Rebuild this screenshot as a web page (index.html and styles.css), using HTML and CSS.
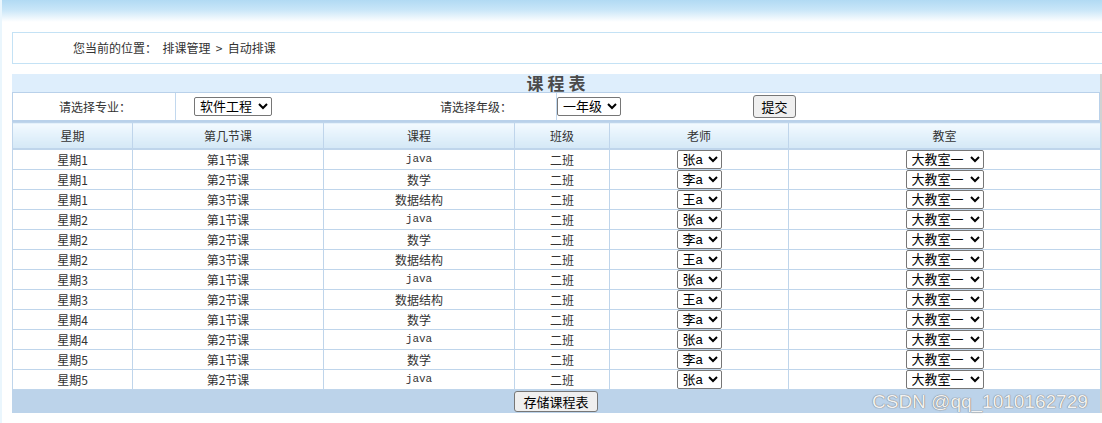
FILE: index.html
```html
<!DOCTYPE html>
<html lang="zh-CN">
<head>
<meta charset="utf-8">
<title>自动排课</title>
<link rel="stylesheet" href="styles.css">
</head>
<body>
<div class="topbar"></div>
<div class="page">
  <div class="crumb">您当前的位置：&nbsp;&nbsp;排课管理&nbsp;&nbsp;&gt;&nbsp;&nbsp;自动排课</div>
  <div class="sheet">
    <div class="title">课程表</div>
    <div class="filter">
      <div class="fcell fa">请选择专业：</div>
      <div class="fcell fb">
        <select class="sel sel-major"><option>软件工程</option></select>
        <span class="lab2">请选择年级：</span>
      </div>
      <div class="fcell fc">
        <select class="sel sel-grade"><option>一年级</option></select>
        <button class="btn btn-submit">提交</button>
      </div>
    </div>
    <table class="grid">
      <colgroup>
        <col class="c1"><col class="c2"><col class="c3"><col class="c4"><col class="c5"><col class="c6">
      </colgroup>
      <thead>
        <tr><th>星期</th><th>第几节课</th><th>课程</th><th>班级</th><th>老师</th><th>教室</th></tr>
      </thead>
      <tbody>
        <tr><td>星期1</td><td>第1节课</td><td class="mono">java</td><td>二班</td><td><select class="sel sel-t"><option>张a</option></select></td><td><select class="sel sel-r"><option>大教室一</option></select></td></tr>
        <tr><td>星期1</td><td>第2节课</td><td>数学</td><td>二班</td><td><select class="sel sel-t"><option>李a</option></select></td><td><select class="sel sel-r"><option>大教室一</option></select></td></tr>
        <tr><td>星期1</td><td>第3节课</td><td>数据结构</td><td>二班</td><td><select class="sel sel-t"><option>王a</option></select></td><td><select class="sel sel-r"><option>大教室一</option></select></td></tr>
        <tr><td>星期2</td><td>第1节课</td><td class="mono">java</td><td>二班</td><td><select class="sel sel-t"><option>张a</option></select></td><td><select class="sel sel-r"><option>大教室一</option></select></td></tr>
        <tr><td>星期2</td><td>第2节课</td><td>数学</td><td>二班</td><td><select class="sel sel-t"><option>李a</option></select></td><td><select class="sel sel-r"><option>大教室一</option></select></td></tr>
        <tr><td>星期2</td><td>第3节课</td><td>数据结构</td><td>二班</td><td><select class="sel sel-t"><option>王a</option></select></td><td><select class="sel sel-r"><option>大教室一</option></select></td></tr>
        <tr><td>星期3</td><td>第1节课</td><td class="mono">java</td><td>二班</td><td><select class="sel sel-t"><option>张a</option></select></td><td><select class="sel sel-r"><option>大教室一</option></select></td></tr>
        <tr><td>星期3</td><td>第2节课</td><td>数据结构</td><td>二班</td><td><select class="sel sel-t"><option>王a</option></select></td><td><select class="sel sel-r"><option>大教室一</option></select></td></tr>
        <tr><td>星期4</td><td>第1节课</td><td>数学</td><td>二班</td><td><select class="sel sel-t"><option>李a</option></select></td><td><select class="sel sel-r"><option>大教室一</option></select></td></tr>
        <tr><td>星期4</td><td>第2节课</td><td class="mono">java</td><td>二班</td><td><select class="sel sel-t"><option>张a</option></select></td><td><select class="sel sel-r"><option>大教室一</option></select></td></tr>
        <tr><td>星期5</td><td>第1节课</td><td>数学</td><td>二班</td><td><select class="sel sel-t"><option>李a</option></select></td><td><select class="sel sel-r"><option>大教室一</option></select></td></tr>
        <tr><td>星期5</td><td>第2节课</td><td class="mono">java</td><td>二班</td><td><select class="sel sel-t"><option>张a</option></select></td><td><select class="sel sel-r"><option>大教室一</option></select></td></tr>
      </tbody>
    </table>
    <div class="foot">
      <button class="btn btn-save">存储课程表</button>
      <span class="mark">CSDN @qq_1010162729</span>
    </div>
  </div>
</div>
</body>
</html>
```

FILE: styles.css
```css
html, body {
  margin: 0;
  padding: 0;
  background: #fff;
  overflow: hidden;
}
body {
  font-family: "Noto Sans CJK SC", "Noto Sans", sans-serif;
  font-size: 12px;
  color: #333;
  height: 423px;
  border-left: 2px solid #eaf6fd;
  box-sizing: border-box;
}
.topbar {
  height: 22px;
  margin-left: -2px;
  background: linear-gradient(to bottom, #b1daf3 0%, #c9e6f8 45%, #ffffff 100%);
}
.page {
  padding: 10px 0 0 10px;
}
.crumb {
  height: 30px;
  line-height: 30px;
  border: 1px solid #c4e2f5;
  border-right: none;
  padding-left: 60px;
  margin-right: -20px;
  color: #333;
}
.sheet {
  margin-top: 10px;
  width: 1088px;
  position: relative;
  box-shadow: 2px 0 0 #d2d2d2;
}
.title {
  height: 19px;
  line-height: 18px;
  background: #deeefc;
  text-align: center;
  font-size: 17px;
  font-weight: bold;
  letter-spacing: 4px;
  padding-left: 4px;
  color: #4a4a4a;
  box-sizing: border-box;
  border-bottom: 1px solid #b9d1ea;
}
.filter {
  display: flex;
  height: 27px;
  border-left: 1px solid #b9d1ea;
  border-right: 1px solid #b9d1ea;
  border-bottom: 2px solid #b9d1ea;
}
.fcell {
  display: flex;
  align-items: center;
}
.fa {
  width: 163px;
  justify-content: center;
  padding-left: 2px;
  box-sizing: border-box;
  border-right: 1px solid #c2d8ee;
}
.fb {
  width: 380px;
  border-right: 1px solid #c2d8ee;
}
.fb .sel-major {
  margin-left: 18px;
}
.lab2 {
  margin-left: auto;
  margin-right: 44px;
}
.fc {
  flex: 1;
}
.sel {
  font-family: "Liberation Sans", "Noto Sans CJK SC", sans-serif;
  font-size: 13px;
  height: 19px;
  box-sizing: border-box;
  padding: 0 0 0 1px;
  color: #000;
  background: #fff;
  border: 1px solid #767676;
  border-radius: 2px;
}
.grid .sel {
  display: block;
  margin: 0 auto;
}
.sel-major { width: 78px; }
.sel-grade { width: 64px; }
.sel-t { width: 45px; }
.sel-r { width: 78px; }
.btn {
  font-family: "Liberation Sans", "Noto Sans CJK SC", sans-serif;
  font-size: 13px;
  color: #000;
  padding: 0;
  background: #efefef;
  border: 1px solid #767676;
  border-radius: 3px;
  box-sizing: border-box;
}
.btn-submit {
  width: 43px;
  height: 23px;
  margin-left: 132px;
}
.grid {
  width: 1088px;
  table-layout: fixed;
  border-collapse: collapse;
}
.c1 { width: 120px; }
.c2 { width: 191px; }
.c3 { width: 191px; }
.c4 { width: 95px; }
.c5 { width: 179px; }
.c6 { width: 312px; }
.grid th, .grid td {
  border: 1px solid #bfd5eb;
  text-align: center;
  padding: 0;
  font-weight: normal;
  color: #333;
  font-size: 12px;
}
.grid th {
  height: 25px;
  line-height: 25px;
  background: linear-gradient(to bottom, #f3faff 0%, #e3f1fb 50%, #d4e8f6 100%);
  border-bottom: 2px solid #bfd5eb;
}
.grid td {
  height: 19px;
  line-height: 19px;
  overflow: hidden;
}
.grid td.mono {
  font-family: "Liberation Mono", monospace;
  font-size: 11px;
}
.foot {
  height: 23px;
  background: #bcd3ea;
  display: flex;
  justify-content: center;
  align-items: center;
  position: relative;
}
.btn-save {
  width: 84px;
  height: 21px;
}
.mark {
  position: absolute;
  left: 860px;
  top: 0;
  font-family: "Liberation Sans", sans-serif;
  font-size: 19px;
  line-height: 23px;
  color: #f2f2f2;
  text-shadow: 0 0 1px #777, 0 0 1px #777;
  white-space: nowrap;
}
```
